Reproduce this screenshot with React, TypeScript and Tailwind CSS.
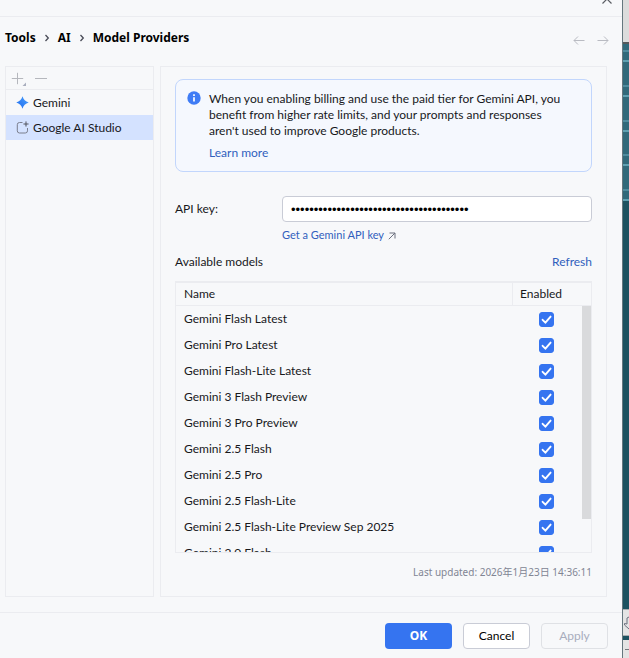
import { useState } from "react";

const models = [
  "Gemini Flash Latest",
  "Gemini Pro Latest",
  "Gemini Flash-Lite Latest",
  "Gemini 3 Flash Preview",
  "Gemini 3 Pro Preview",
  "Gemini 2.5 Flash",
  "Gemini 2.5 Pro",
  "Gemini 2.5 Flash-Lite",
  "Gemini 2.5 Flash-Lite Preview Sep 2025",
  "Gemini 2.0 Flash",
];

function ModelRow({ name }: { name: string }) {
  const [enabled, setEnabled] = useState(true);
  return (
    <tr className="h-[26px]">
      <td className="p-0 pl-2">{name}</td>
      <td className="p-0 pl-[27px]">
        <label className="relative block size-[15px]">
          <input
            type="checkbox"
            aria-label={name}
            checked={enabled}
            onChange={() => setEnabled(!enabled)}
            className="block size-[15px] appearance-none rounded-[3px] border border-[#c9ccd6] bg-white checked:border-[#3574f0] checked:bg-[#3574f0]"
          />
          {enabled && (
            <svg viewBox="0 0 15 15" className="pointer-events-none absolute inset-0 size-[15px]" fill="none" stroke="#fff" strokeWidth="1.9" strokeLinecap="round" strokeLinejoin="round">
              <path d="M3.6 7.8 6.4 10.7 11.6 4.6" />
            </svg>
          )}
        </label>
      </td>
    </tr>
  );
}

function Crumb() {
  return (
    <svg viewBox="0 0 6 8" className="h-2 w-1.5" fill="none" stroke="#494b57" strokeWidth="1.3">
      <path d="M1.5 1 4.3 4 1.5 7" />
    </svg>
  );
}

function Sidebar() {
  return (
    <nav className="w-[149px] shrink-0 border border-[#ebecf0]">
      <div className="flex h-[23px] items-center gap-[7px] border-b border-[#ebecf0] pl-[5px]">
        <button aria-label="Add">
          <svg viewBox="0 0 16 16" className="mt-1 size-4" fill="none" stroke="#b5b7bd">
            <path d="M6.5 .8V12.2M.8 6.5H12.2" />
            <path d="M15 10.5V14H11.5Z" fill="#a8adbd" stroke="none" />
          </svg>
        </button>
        <button aria-label="Remove">
          <svg viewBox="0 0 14 16" className="mt-1 h-4 w-3.5" fill="none" stroke="#b5b7bd">
            <path d="M1 6.5H13" />
          </svg>
        </button>
      </div>
      <button className="flex h-[25px] w-full items-center gap-1 pl-[10px] text-left">
        <svg viewBox="0 0 14 14" className="size-[13px]">
          <defs>
            <linearGradient id="spark" x1="0" y1="1" x2="1" y2="0">
              <stop offset="0" stopColor="#1f6bf0" />
              <stop offset="1" stopColor="#4aa0fa" />
            </linearGradient>
          </defs>
          <path d="M7 .3C8 3.8 10.2 6 13.7 7 10.2 8 8 10.2 7 13.7 6 10.2 3.8 8 .3 7 3.8 6 6 3.8 7 .3Z" fill="url(#spark)" />
        </svg>
        Gemini
      </button>
      <button className="flex h-[25px] w-full items-center gap-1 bg-[#d4e2ff] pl-[10px] text-left">
        <svg viewBox="0 0 13 13" className="size-[13px]" fill="none" stroke="#7a7e8c">
          <path d="M6.5 1.5H3.5A2.2 2.2 0 0 0 1.3 3.7V9.8A2.2 2.2 0 0 0 3.5 12H9.3A2.2 2.2 0 0 0 11.5 9.8V7" />
          <path d="M10 .2C10.3 2 11 2.7 12.8 3 11 3.3 10.3 4 10 5.8 9.7 4 9 3.3 7.2 3 9 2.7 9.7 2 10 .2Z" fill="#6c707e" stroke="#6c707e" strokeWidth=".4" />
        </svg>
        Google AI Studio
      </button>
    </nav>
  );
}

function Settings() {
  return (
    <section className="flex min-w-0 flex-1 flex-col border border-[#ebecf0] px-[14px] pt-3">
      <div className="flex gap-2 rounded-lg border border-[#c2d6fc] bg-[#f5f8fe] pt-[11px] pr-5 pb-[10px] pl-[11px]">
        <svg viewBox="0 0 14 14" className="size-3.5 shrink-0">
          <circle cx="7" cy="7" r="6.7" fill="#3f7cf5" />
          <path d="M7 6.2V10.4M7 3.3V4.9" stroke="#fff" strokeWidth="1.7" />
        </svg>
        <div className="leading-4">
          <p>When you enabling billing and use the paid tier for Gemini API, you benefit from higher rate limits, and your prompts and responses aren't used to improve Google products.</p>
          <a href="#learn" className="mt-[6px] block text-[#315fbd]">Learn more</a>
        </div>
      </div>

      <div className="mt-6 flex items-center">
        <label htmlFor="key" className="w-[107px] shrink-0">API key:</label>
        <input
          id="key"
          type="password"
          defaultValue="000000000000000000000000000000000000000"
          className="h-[26px] min-w-0 flex-1 rounded border border-[#c9ccd6] bg-white px-2 font-['Liberation_Sans',sans-serif] text-[13px] text-black"
        />
      </div>
      <a href="#get-key" className="mt-[5px] ml-[107px] flex h-4 items-center gap-1 self-start text-[11px] text-[#315fbd]">
        Get a Gemini API key
        <svg viewBox="0 0 8 8" className="mt-px size-2" fill="none" stroke="#6c707e">
          <path d="M.8 7.2 7 1M1.5 1H7V6.5" />
        </svg>
      </a>

      <div className="mt-[11px] flex h-4 items-center justify-between">
        <h2>Available models</h2>
        <button className="text-[#315fbd]">Refresh</button>
      </div>

      <div className="relative mt-[11px] h-[272px] overflow-hidden border border-t-2 border-[#ebecf0]">
        <table className="w-full table-fixed border-separate border-spacing-0">
          <thead>
            <tr className="h-[23px]">
              <th className="border-b border-[#ebecf0] p-0 pl-2 text-left font-normal">Name</th>
              <th className="w-[79px] border-b border-l border-[#ebecf0] p-0 pl-[7px] text-left font-normal">Enabled</th>
            </tr>
          </thead>
          <tbody>
            {models.map((name) => (
              <ModelRow key={name} name={name} />
            ))}
          </tbody>
        </table>
        <div className="absolute top-[23px] right-0 h-[213px] w-[9px] bg-[#d9dadc]" />
      </div>
      <p className="mt-[11px] mb-4 text-right font-['Noto_Sans','Noto_Sans_CJK_SC',sans-serif] text-[10px] leading-4 text-[#818594]">Last updated: 2026年1月23日 14:36:11</p>
    </section>
  );
}

function Backdrop() {
  return (
    <div className="flex w-[7px] shrink-0 flex-col border-l border-[#65777e] bg-[#1d5260]">
      <div className="h-11 border-b-2 border-[#55585a] bg-[#dcdcdc]" />
      <div className="flex h-[157px] flex-col justify-between bg-[#31697a] pt-1.5">
        {[0, 1, 2, 3, 4].map((n) => (
          <div key={n} className="flex h-3 flex-col justify-between">
            <div className="h-0.5 bg-[#4f8b9d]" />
            <div className="h-0.5 bg-[#5fa0b1]" />
          </div>
        ))}
      </div>
      <div className="mt-auto flex h-[27px] items-center overflow-hidden border-y border-[#a8acae] bg-[#e4e4e4]">
        <svg viewBox="0 0 6 14" className="h-3.5 w-1.5" fill="none" stroke="#6c707e">
          <path d="M6 1 4 2V8L1.5 7.5V9L6 13" />
        </svg>
      </div>
      <div className="mt-1 flex h-[18px] items-center bg-[#e4e4e4]">
        <div className="ml-0.5 h-px w-full bg-[#77797d]" />
      </div>
    </div>
  );
}

export default function App() {
  return (
    <div className="flex min-h-screen bg-[#f7f8fa] font-['Lato','Noto_Sans_CJK_SC',sans-serif] text-[12px] leading-4 text-[#17181c]">
      <main className="flex min-w-0 flex-1 flex-col">
        <div className="flex h-[17px] items-start justify-end border-b border-[#ebecf0] pr-[9px]">
          <button aria-label="Close">
            <svg viewBox="0 0 12 4" className="block h-1 w-3" fill="none" stroke="#5a5d63" strokeWidth="1.2">
              <path d="M1.5 3.5 6-1 10.5 3.5" />
            </svg>
          </button>
        </div>
        <header className="mb-[7px] flex h-[42px] items-center justify-between pr-[13px] pl-[5px]">
          <div className="flex items-center gap-2 font-['Noto_Sans',sans-serif] font-bold text-black">
            <span>Tools</span>
            <Crumb />
            <span>AI</span>
            <Crumb />
            <span>Model Providers</span>
          </div>
          <div className="mt-1 flex gap-3">
            <button aria-label="Back">
              <svg viewBox="0 0 12 10" className="block h-2.5 w-3" fill="none" stroke="#b9bbc2">
                <path d="M11.5 5.5H1M5 1.5 1 5.5 5 9.5" />
              </svg>
            </button>
            <button aria-label="Forward">
              <svg viewBox="0 0 12 10" className="block h-2.5 w-3" fill="none" stroke="#b9bbc2">
                <path d="M.5 5.5H11M7 1.5 11 5.5 7 9.5" />
              </svg>
            </button>
          </div>
        </header>
        <div className="flex flex-1 gap-[6px] pr-[15px] pl-[5px]">
          <Sidebar />
          <Settings />
        </div>
        <footer className="mt-[15px] flex justify-end gap-[11px] border-t border-[#ebecf0] pt-[10px] pr-[14px] pb-[9px]">
          <button className="h-[26px] w-[67px] rounded bg-[#3574f0] font-['Noto_Sans',sans-serif] font-bold text-white">OK</button>
          <button className="h-[26px] w-[67px] rounded border border-[#c9ccd6] bg-white text-black">Cancel</button>
          <button disabled className="h-[26px] w-[67px] rounded border border-[#dfe1e5] text-[#a8adbd]">Apply</button>
        </footer>
      </main>
      <Backdrop />
    </div>
  );
}
